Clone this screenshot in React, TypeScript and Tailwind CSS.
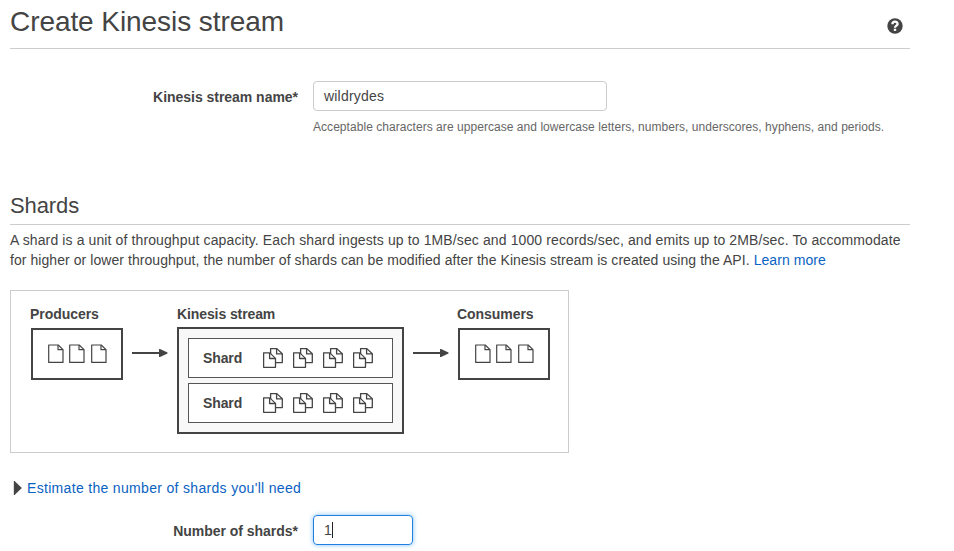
import React from "react";

function DocIcon() {
  return (
    <svg width="16" height="19" viewBox="0 0 16 19" className="block shrink-0">
      <g fill="none" stroke="#444" strokeLinejoin="round">
        <path d="M.7 1H10.2L15 5.6V18.4H.7Z" strokeWidth="1.2" />
        <path d="M10 1V5.7H15" strokeWidth="1.2" />
      </g>
    </svg>
  );
}

function CopyIcon() {
  return (
    <svg width="20" height="20" viewBox="0 0 20 20" className="block shrink-0">
      <g fill="#fff" stroke="#444" strokeWidth="1.3" strokeLinejoin="round">
        <path d="M7.6.6H13.8L19.3 5.8V14.6H7.6Z" />
        <path d="M13.6.7V5.9H19.2" fill="none" />
        <path d="M.6 4.9H6.8L12.5 10.4V19.3H.6Z" />
        <path d="M6.6 5V10.5H12.4" fill="none" />
      </g>
    </svg>
  );
}

function Arrow() {
  return (
    <svg width="36" height="10" viewBox="0 0 36 10" className="mt-[44px] block shrink-0">
      <path d="M0 4H27V6H0Z M27 1.6Q27 .8 28 1.1L35.5 4.4V5.6L28 8.9Q27 9.2 27 8.4Z" fill="#444" />
    </svg>
  );
}

function Endpoint({ title }: { title: string }) {
  return (
    <div className="w-[93px] shrink-0">
      <div className="h-5 font-bold tracking-[-0.05px] whitespace-nowrap">{title}</div>
      <div className="mt-[4px] ml-px flex h-[52px] w-[92px] items-start border-2 border-[#444] pt-[14px] pl-[15px]">
        <DocIcon />
        <span className="w-[5px]" />
        <DocIcon />
        <span className="w-[6px]" />
        <DocIcon />
      </div>
    </div>
  );
}

function Shard() {
  return (
    <div className="flex h-10 items-center border border-[#555] bg-white pl-[14px]">
      <span className="w-[60px] font-bold tracking-[-0.12px]">Shard</span>
      <div className="flex gap-[10px]">
        <CopyIcon />
        <CopyIcon />
        <CopyIcon />
        <CopyIcon />
      </div>
    </div>
  );
}

export default function App() {
  return (
    <main className="h-[551px] w-[954px] overflow-hidden bg-white pl-[10px] font-['Liberation_Sans',Arial,sans-serif] text-[14px] leading-5 text-[#444]">
      <div className="w-[900px]">
        <header className="flex h-[49px] justify-between border-b border-[#ccc]">
          <h1 className="mt-[4px] text-[28px] leading-[36px] tracking-[-0.07px] whitespace-nowrap">Create Kinesis stream</h1>
          <svg width="16" height="16" viewBox="0 0 16 16" className="mt-[18px] mr-[7px] block">
            <circle cx="8" cy="8" r="7.7" fill="#444" />
            <path d="M5.4 6.2C5.5 2.9 10.6 2.9 10.6 5.9C10.6 7.7 8 7.6 8 9.7" fill="none" stroke="#fff" strokeWidth="2.3" />
            <path d="M6.8 10.7H9.2V12.9H6.8Z" fill="#fff" />
          </svg>
        </header>

        <div className="mt-8 flex">
          <label className="mt-[6px] mr-[15px] w-[288px] text-right font-bold tracking-[-0.03px] whitespace-nowrap">Kinesis stream name*</label>
          <div>
            <div className="flex h-[30px] w-[294px] items-center rounded-[4px] border border-[#ccc] pl-[10px] tracking-[0.2px]">wildrydes</div>
            <p className="mt-[6px] text-[12px] leading-5 tracking-[0.048px] whitespace-nowrap text-[#666]">
              Acceptable characters are uppercase and lowercase letters, numbers, underscores, hyphens, and periods.
            </p>
          </div>
        </div>

        <h2 className="mt-[54px] h-[34px] border-b border-[#ccc] pt-px text-[22px] leading-[28px] tracking-[-0.1px]">Shards</h2>
        <div className="mt-[5px] whitespace-nowrap">
          <p className="tracking-[0.115px]">A shard is a unit of throughput capacity. Each shard ingests up to 1MB/sec and 1000 records/sec, and emits up to 2MB/sec. To accommodate</p>
          <p className="tracking-[0.062px]">
            for higher or lower throughput, the number of shards can be modified after the Kinesis stream is created using the API.{" "}
            <a className="text-[#0a62c2]">Learn more</a>
          </p>
        </div>

        <section className="mt-5 flex h-[163px] w-[559px] items-start border border-[#ccc] pt-[13px] pl-[19px]">
          <Endpoint title="Producers" />
          <div className="ml-[9px]"><Arrow /></div>
          <div className="ml-[9px] w-[227px] shrink-0">
            <div className="h-5 font-bold tracking-[-0.1px]">Kinesis stream</div>
            <div className="mt-[3px] flex h-[107px] flex-col gap-[5px] border-2 border-[#444] bg-[#f8f8f8] p-[9px]">
              <Shard />
              <Shard />
            </div>
          </div>
          <div className="ml-[9px]"><Arrow /></div>
          <div className="ml-[8px]"><Endpoint title="Consumers" /></div>
        </section>

        <div className="mt-[25px] flex h-5 items-center">
          <svg width="9" height="14" viewBox="0 0 9 14" className="mr-[5px] ml-[3px] block">
            <path d="M.8 0H1.6L8.8 7 1.6 14H.8Z" fill="#444" />
          </svg>
          <a className="tracking-[0.32px] whitespace-nowrap text-[#0a62c2]">Estimate the number of shards you'll need</a>
        </div>

        <div className="mt-[17px] flex">
          <label className="mt-[6px] mr-[15px] w-[288px] text-right font-bold tracking-[-0.03px]">Number of shards*</label>
          <div className="flex h-[30px] w-[100px] items-center rounded-[4px] border border-[#1f7fe0] pl-[10px] shadow-[0_0_5px_#7fc0f5]">
            <span>1</span>
            <span className="h-[16px] w-px bg-[#222]" />
          </div>
        </div>
      </div>
    </main>
  );
}
